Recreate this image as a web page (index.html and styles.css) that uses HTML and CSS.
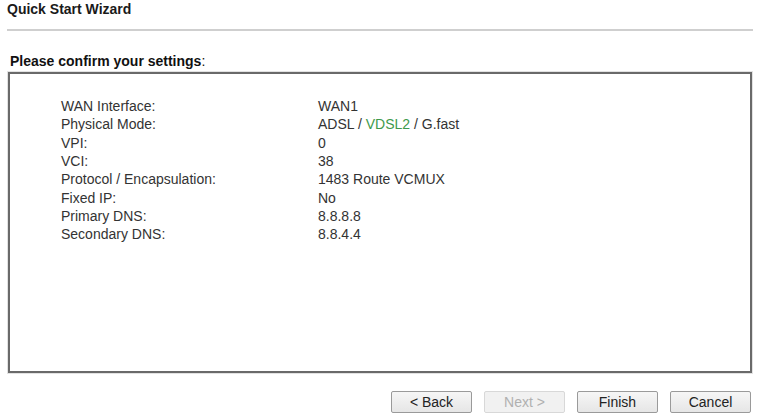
FILE: index.html
```html
<!DOCTYPE html>
<html>
<head>
<link rel="stylesheet" href="styles.css">
</head>
<body>
<div class="page">
  <div class="title">Quick Start Wizard</div>
  <div class="rule"></div>

  <div class="heading">Please confirm your settings<span class="colon">:</span></div>
  <div class="panel">
    <table class="summary">
      <tr><td class="label">WAN Interface:</td><td>WAN1</td></tr>
      <tr><td class="label">Physical Mode:</td><td>ADSL / <span class="active">VDSL2</span> / G.fast</td></tr>
      <tr><td class="label">VPI:</td><td>0</td></tr>
      <tr><td class="label">VCI:</td><td>38</td></tr>
      <tr><td class="label">Protocol / Encapsulation:</td><td>1483 Route VCMUX</td></tr>
      <tr><td class="label">Fixed IP:</td><td>No</td></tr>
      <tr><td class="label">Primary DNS:</td><td>8.8.8.8</td></tr>
      <tr><td class="label">Secondary DNS:</td><td>8.8.4.4</td></tr>
    </table>
  </div>

  <div class="buttons">
    <button class="btn">&lt; Back</button>
    <button class="btn" disabled>Next &gt;</button>
    <button class="btn">Finish</button>
    <button class="btn">Cancel</button>
  </div>
</div>
</body>
</html>
```

FILE: styles.css
```css
body {
  margin: 0;
  background-color: #fff;
  font-family: "Liberation Sans", Arial, sans-serif;
  font-size: 14px;
  color: #222;
}

.page {
  width: 759px;
}

.title {
  font-weight: bold;
  padding: 1px 0 0 7px;
  line-height: 16px;
  color: #1a1a1a;
}

/* thin grey divider under the wizard title */
.rule {
  margin: 12px 6px 0 7px;
  height: 2px;
  background-color: #cfcfcf;
}

.heading {
  font-weight: bold;
  padding: 22px 0 0 10px;
  line-height: 17px;
  color: #111;
}
.heading .colon {
  font-weight: normal;
}

.panel {
  margin: 2px 7px 0 8px;
  height: 274px;
  border: 2px solid #6a6a6a;
  box-shadow: 0 0 0 1px #e2e2e2;
  padding: 23px 0 0 51px;
}

.summary {
  border-collapse: collapse;
  color: #333;
}
.summary td {
  padding: 0;
  line-height: 18.33px;
  white-space: nowrap;
}
.summary td.label {
  width: 257px;
}
.summary .active {
  color: #3e9a4c;
}

.buttons {
  display: flex;
  justify-content: flex-end;
  gap: 12px;
  margin: 18px 8px 0 0;
}

.btn {
  width: 81px;
  height: 22px;
  padding: 0;
  font-family: "Liberation Sans", Arial, sans-serif;
  font-size: 14px;
  color: #222;
  background: linear-gradient(#f6f6f6, #e6e6e6);
  border: 1px solid #9a9a9a;
  border-radius: 2px;
}
.btn:disabled {
  color: #b0b0b0;
  background: #f1f1f1;
  border-color: #d8d8d8;
}
```
